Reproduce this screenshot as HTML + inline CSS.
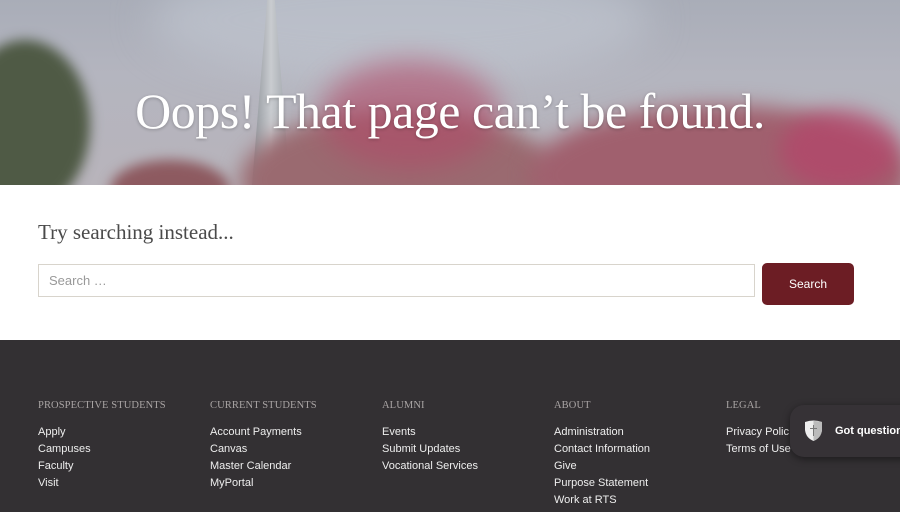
<!DOCTYPE html>
<html><head><meta charset="utf-8"><style>
*{margin:0;padding:0;box-sizing:border-box}
body{width:900px;height:512px;overflow:hidden;background:#fff;font-family:"Liberation Sans",sans-serif}
.hero{position:absolute;left:0;top:0;width:900px;height:185px;overflow:hidden;
background:linear-gradient(180deg,#a9adb8 0%,#b4b5bf 40%,#b8b4bb 100%)}
.blob{position:absolute;border-radius:50%}
.hero h1{position:absolute;left:0;width:900px;top:82px;text-align:center;font-family:"Liberation Serif",serif;font-weight:normal;font-size:50px;color:#fff;letter-spacing:-0.5px;text-shadow:0 1px 3px rgba(0,0,0,.25)}
.try{position:absolute;left:38px;top:220px;font-family:"Liberation Serif",serif;font-size:21px;color:#4a4a4a}
.inp{position:absolute;left:38px;top:264px;width:717px;height:33px;border:1px solid #d8d4cc;font-size:13px;color:#999;padding:8px 10px}
.btn{position:absolute;left:762px;top:263px;width:92px;height:42px;background:#6c1d24;border-radius:5px;color:#fff;font-size:12px;text-align:center;line-height:42px}
.foot{position:absolute;left:0;top:340px;width:900px;height:172px;background:#333033}
.col{position:absolute;top:60px}
.col h4{font-family:"Liberation Serif",serif;font-weight:normal;font-size:10.5px;color:#a9a4a4;letter-spacing:.1px;margin-bottom:13px}
.col div{font-size:11px;color:#eee;line-height:17px}
.chat{position:absolute;left:790px;top:405px;width:120px;height:52px;background:#363236;border-radius:14px 0 0 14px;box-shadow:0 2px 8px rgba(0,0,0,.45)}
.chat span{position:absolute;left:45px;top:20px;font-size:11px;font-weight:bold;color:#fff;white-space:nowrap}
</style></head><body>
<div class="hero">
<div class="blob" style="left:150px;top:-40px;width:500px;height:120px;background:rgba(200,205,215,.5);filter:blur(20px)"></div>
<div style="position:absolute;left:252px;top:0;width:38px;height:185px;background:linear-gradient(90deg,#8d9298,#c9ccd0 50%,#9aa0a6);clip-path:polygon(40% 0,60% 0,100% 100%,0 100%)"></div>
<div class="blob" style="left:-40px;top:40px;width:130px;height:170px;background:#4f5a45;filter:blur(6px)"></div>
<div class="blob" style="left:240px;top:110px;width:320px;height:140px;background:#9a6a70;filter:blur(10px)"></div>
<div class="blob" style="left:320px;top:60px;width:180px;height:110px;background:#b04a68;filter:blur(14px);opacity:.6"></div>
<div class="blob" style="left:530px;top:105px;width:380px;height:140px;background:#a0606e;filter:blur(10px)"></div>
<div class="blob" style="left:780px;top:110px;width:120px;height:80px;background:#b5446a;filter:blur(10px);opacity:.7"></div>
<div class="blob" style="left:110px;top:160px;width:120px;height:60px;background:#8d5a60;filter:blur(6px)"></div>
<h1>Oops! That page can’t be found.</h1>
</div>
<div class="try">Try searching instead...</div>
<div class="inp">Search …</div>
<div class="btn">Search</div>
<div class="foot">
<div class="col" style="left:38px"><h4>PROSPECTIVE STUDENTS</h4><div>Apply</div><div>Campuses</div><div>Faculty</div><div>Visit</div></div>
<div class="col" style="left:210px"><h4>CURRENT STUDENTS</h4><div>Account Payments</div><div>Canvas</div><div>Master Calendar</div><div>MyPortal</div></div>
<div class="col" style="left:382px"><h4>ALUMNI</h4><div>Events</div><div>Submit Updates</div><div>Vocational Services</div></div>
<div class="col" style="left:554px"><h4>ABOUT</h4><div>Administration</div><div>Contact Information</div><div>Give</div><div>Purpose Statement</div><div>Work at RTS</div></div>
<div class="col" style="left:726px"><h4>LEGAL</h4><div>Privacy Polic</div><div>Terms of Use</div></div>
</div>
<div class="chat">
<svg style="position:absolute;left:14px;top:15px" width="19" height="22" viewBox="0 0 19 22"><path d="M1 2 Q9.5 -1 18 2 L18 10 Q17 18 9.5 21 Q2 18 1 10Z" fill="#eee"/><path d="M9.5 1 Q14 1 18 2 L18 10 Q17 18 9.5 21Z" fill="#bbb"/><path d="M9.5 5V16M6 8.5H13" stroke="#777" stroke-width="1"/></svg>
<span>Got questions?</span></div>
</body></html>
